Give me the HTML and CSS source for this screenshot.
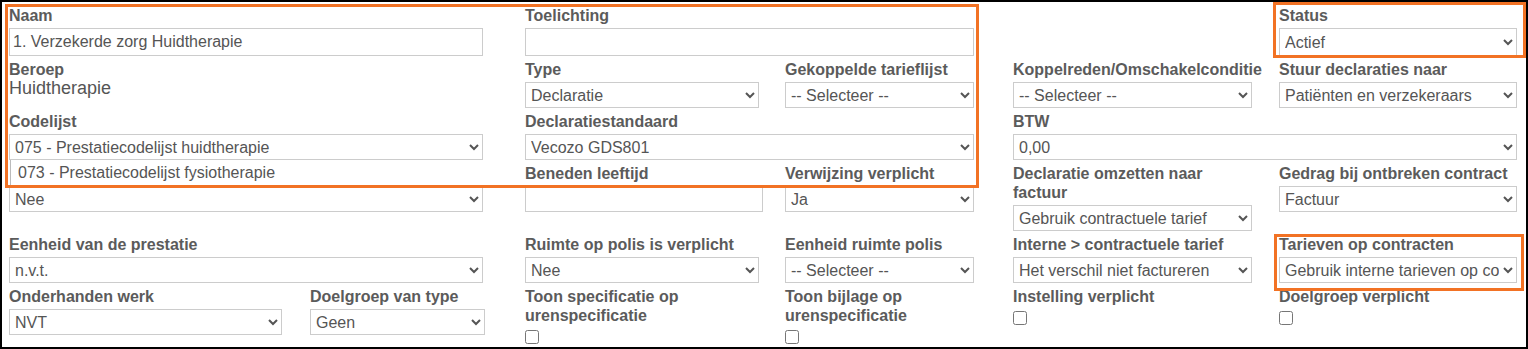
FILE: index.html
```html
<!DOCTYPE html>
<html lang="nl">
<head>
    <meta charset="UTF-8" />
    <title>Prestatie instellingen</title>
    <link rel="stylesheet" href="styles.css">
</head>
<body>
    <div class="panel">
        <div class="form-grid">
            <!-- rij 1 -->
            <div class="cell cell-a">
                <div class="field">
                    <label class="label">Naam</label>
                    <input class="control control-lg" type="text" value="1. Verzekerde zorg Huidtherapie">
                </div>
            </div>
            <div class="cell cell-b">
                <div class="field">
                    <label class="label">Toelichting</label>
                    <input class="control control-lg" type="text" value="">
                </div>
            </div>
            <div class="cell cell-c"></div>
            <div class="cell cell-d">
                <div class="field">
                    <label class="label">Status</label>
                    <select class="control control-lg"><option>Actief</option></select>
                </div>
            </div>

            <!-- rij 2 -->
            <div class="cell cell-a">
                <div class="field">
                    <label class="label">Beroep</label>
                    <div class="static-value">Huidtherapie</div>
                </div>
            </div>
            <div class="cell cell-b pair-b">
                <div class="field">
                    <label class="label">Type</label>
                    <select class="control"><option>Declaratie</option></select>
                </div>
                <div class="field">
                    <label class="label">Gekoppelde tarieflijst</label>
                    <select class="control"><option>-- Selecteer --</option></select>
                </div>
            </div>
            <div class="cell cell-c">
                <div class="field">
                    <label class="label nowrap">Koppelreden/Omschakelconditie</label>
                    <select class="control"><option>-- Selecteer --</option></select>
                </div>
            </div>
            <div class="cell cell-d">
                <div class="field">
                    <label class="label">Stuur declaraties naar</label>
                    <select class="control"><option>Patiënten en verzekeraars</option></select>
                </div>
            </div>

            <!-- rij 3 -->
            <div class="cell cell-a">
                <div class="field dropdown-host">
                    <label class="label">Codelijst</label>
                    <select class="control"><option>075 - Prestatiecodelijst huidtherapie</option></select>
                    <div class="dropdown-list">073 - Prestatiecodelijst fysiotherapie</div>
                </div>
            </div>
            <div class="cell cell-b">
                <div class="field">
                    <label class="label">Declaratiestandaard</label>
                    <select class="control"><option>Vecozo GDS801</option></select>
                </div>
            </div>
            <div class="cell cell-wide">
                <div class="field">
                    <label class="label">BTW</label>
                    <select class="control"><option>0,00</option></select>
                </div>
            </div>

            <!-- rij 4 (label valt onder de open keuzelijst) -->
            <div class="cell cell-a">
                <div class="field">
                    <label class="label">&nbsp;</label>
                    <select class="control"><option>Nee</option></select>
                </div>
            </div>
            <div class="cell cell-b pair-b">
                <div class="field">
                    <label class="label">Beneden leeftijd</label>
                    <input class="control control-num" type="text" value="">
                </div>
                <div class="field">
                    <label class="label">Verwijzing verplicht</label>
                    <select class="control"><option>Ja</option></select>
                </div>
            </div>
            <div class="cell cell-c">
                <div class="field">
                    <label class="label">Declaratie omzetten naar factuur</label>
                    <select class="control"><option>Gebruik contractuele tarief</option></select>
                </div>
            </div>
            <div class="cell cell-d">
                <div class="field">
                    <label class="label">Gedrag bij ontbreken contract</label>
                    <select class="control"><option>Factuur</option></select>
                </div>
            </div>

            <!-- rij 5 -->
            <div class="cell cell-a">
                <div class="field">
                    <label class="label">Eenheid van de prestatie</label>
                    <select class="control"><option>n.v.t.</option></select>
                </div>
            </div>
            <div class="cell cell-b pair-b">
                <div class="field">
                    <label class="label">Ruimte op polis is verplicht</label>
                    <select class="control"><option>Nee</option></select>
                </div>
                <div class="field">
                    <label class="label">Eenheid ruimte polis</label>
                    <select class="control"><option>-- Selecteer --</option></select>
                </div>
            </div>
            <div class="cell cell-c">
                <div class="field">
                    <label class="label">Interne &gt; contractuele tarief</label>
                    <select class="control"><option>Het verschil niet factureren</option></select>
                </div>
            </div>
            <div class="cell cell-d">
                <div class="field">
                    <label class="label">Tarieven op contracten</label>
                    <select class="control"><option>Gebruik interne tarieven op contracten</option></select>
                </div>
            </div>

            <!-- rij 6 -->
            <div class="cell cell-a pair-a">
                <div class="field">
                    <label class="label">Onderhanden werk</label>
                    <select class="control"><option>NVT</option></select>
                </div>
                <div class="field">
                    <label class="label">Doelgroep van type</label>
                    <select class="control"><option>Geen</option></select>
                </div>
            </div>
            <div class="cell cell-b pair-b">
                <div class="field">
                    <label class="label">Toon specificatie op urenspecificatie</label>
                    <input class="check" type="checkbox">
                </div>
                <div class="field">
                    <label class="label">Toon bijlage op urenspecificatie</label>
                    <input class="check" type="checkbox">
                </div>
            </div>
            <div class="cell cell-c">
                <div class="field">
                    <label class="label">Instelling verplicht</label>
                    <input class="check" type="checkbox">
                </div>
            </div>
            <div class="cell cell-d">
                <div class="field">
                    <label class="label">Doelgroep verplicht</label>
                    <input class="check" type="checkbox">
                </div>
            </div>
        </div>

        <!-- markeringen -->
        <div class="mark mark-main"></div>
        <div class="mark mark-status"></div>
        <div class="mark mark-tarief"></div>
    </div>
</body>
</html>
```

FILE: styles.css
```css
/* pagina */
body {
    margin: 0;
    font-family: "Liberation Sans", Arial, sans-serif;
    background: #fff;
}

/* kader rond het formulier */
.panel {
    position: relative;
    box-sizing: border-box;
    width: 1528px;
    height: 349px;
    border: 2px solid #000;
    padding: 4px 0 0 7px;
    overflow: hidden;
}

/* kolommen */
.form-grid {
    display: grid;
    grid-template-columns: 516px 488px 266px 238px;
    align-items: start;
}

.cell-a { padding-right: 42px; }
.cell-b { padding-right: 39px; }
.cell-c { padding-right: 27px; }
.cell-wide { grid-column: span 2; }

.pair-a {
    display: grid;
    grid-template-columns: 273px 175px;
    column-gap: 28px;
}

.pair-b {
    display: grid;
    grid-template-columns: 234px 189px;
    column-gap: 26px;
}

/* velden */
.field {
    margin-bottom: 4px;
}

.label {
    display: block;
    font-size: 16px;
    font-weight: bold;
    line-height: 19px;
    color: #5b5b5b;
}

.nowrap {
    white-space: nowrap;
}

.static-value {
    font-size: 18px;
    line-height: 18px;
    color: #555;
}

.control {
    display: block;
    box-sizing: border-box;
    width: 100%;
    height: 26px;
    margin: 3px 0 0;
    border: 1px solid #ccc;
    border-radius: 0;
    background: #fff;
    font-family: "Liberation Sans", Arial, sans-serif;
    font-size: 16px;
    color: #555;
}

input.control {
    padding: 0 3px;
}

select.control {
    padding: 0 1px;
}

.control-lg {
    height: 28px;
}

.control-num {
    width: calc(100% + 4px);
}

.check {
    display: block;
    width: 14px;
    height: 14px;
    margin: 5px 0 0;
}

/* open keuzelijst onder Codelijst */
.dropdown-host {
    position: relative;
}

.dropdown-list {
    position: absolute;
    left: 1px;
    right: 0;
    top: 100%;
    height: 26px;
    padding-left: 7px;
    border-left: 1px solid #bbb;
    background: #fff;
    font-size: 16px;
    line-height: 26px;
    color: #555;
    z-index: 2;
}

/* oranje markeringen */
.mark {
    position: absolute;
    box-sizing: border-box;
    border: 3px solid #f27224;
    z-index: 3;
}

.mark-main {
    left: 3px;
    top: 2px;
    width: 974px;
    height: 184px;
}

.mark-status {
    left: 1271px;
    top: 0;
    width: 253px;
    height: 56px;
}

.mark-tarief {
    left: 1272px;
    top: 232px;
    width: 250px;
    height: 57px;
}
```
